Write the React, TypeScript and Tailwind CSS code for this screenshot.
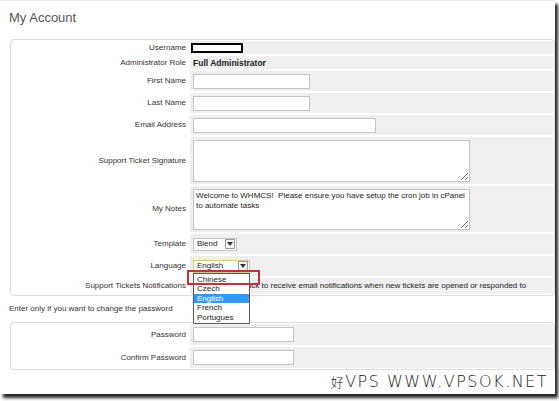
import React from "react";

const FONT = "font-['Liberation_Sans',Arial,sans-serif]";

function SelectArrow() {
  return (
    <span className="flex h-[10px] w-[10px] items-center justify-center border border-[#9a9a9a] bg-[#f4f4f4]">
      <svg width="6" height="4" viewBox="0 0 6 4">
        <path d="M0 0 L6 0 L3 4 Z" fill="#333" />
      </svg>
    </span>
  );
}

function Row({
  label,
  hClass,
  children,
}: {
  label: string;
  hClass: string;
  children?: React.ReactNode;
}) {
  return (
    <div className={`flex ${hClass}`}>
      <div className="flex w-[176px] items-center justify-end pr-[2px] text-[8px] text-[#333]">
        {label}
      </div>
      <div className="relative ml-[2px] flex flex-1 items-center bg-[#efefef] pl-[3px] text-[8px] text-[#222]">
        {children}
      </div>
    </div>
  );
}

export default function App() {
  return (
    <div className={`relative h-[401px] w-[559px] overflow-hidden bg-white ${FONT}`}>
      <div className="flex h-[394px] w-[555px] flex-col border-t border-[#ececec] bg-white shadow-[3px_4px_3px_rgba(0,0,0,0.85)]">
        <div className="h-[39px] pl-[9px] pt-[9px] text-[13px] leading-[16px] text-[#555]">
          My Account
        </div>

        <div className="ml-[10px] flex flex-col gap-[2px] rounded-[4px] border border-[#dcdcdc] p-[1px]">
          <Row label="Username" hClass="h-[13px]">
            <div className="-ml-[2px] h-[10px] w-[52px] border-2 border-black bg-white" />
          </Row>
          <Row label="Administrator Role" hClass="h-[13px]">
            <span className="font-bold text-[8.5px] text-[#222]">Full Administrator</span>
          </Row>
          <Row label="First Name" hClass="h-[20px]">
            <div className="h-[15px] w-[117px] border border-[#c4c4c4] bg-white" />
          </Row>
          <Row label="Last Name" hClass="h-[20px]">
            <div className="h-[15px] w-[117px] border border-[#c4c4c4] bg-white" />
          </Row>
          <Row label="Email Address" hClass="h-[20px]">
            <div className="h-[15px] w-[183px] border border-[#c4c4c4] bg-white" />
          </Row>
          <Row label="Support Ticket Signature" hClass="h-[47px]">
            <textarea
              readOnly
              className={`h-[42px] w-[277px] border border-[#c4c4c4] bg-white text-[8px] outline-none ${FONT}`}
            />
          </Row>
          <Row label="My Notes" hClass="h-[46px]">
            <textarea
              readOnly
              value={"Welcome to WHMCS!  Please ensure you have setup the cron job in cPanel to automate tasks"}
              className={`h-[41px] w-[277px] resize border border-[#c4c4c4] bg-white px-[2px] py-[1px] text-[8px] leading-[10px] text-[#222] outline-none ${FONT}`}
            />
          </Row>
          <Row label="Template" hClass="h-[20px]">
            <div className="flex h-[13px] w-[44px] items-center justify-between border border-[#c4c4c4] bg-white pl-[3px] pr-[1px]">
              <span>Blend</span>
              <SelectArrow />
            </div>
          </Row>
          <Row label="Language" hClass="h-[20px]">
            <div className="relative flex h-[13px] w-[57px] items-center justify-between border border-[#d9c48a] bg-white pl-[3px] pr-[1px]">
              <span>English</span>
              <SelectArrow />
              <div className="absolute left-[-1px] top-[12px] z-10 flex w-[57px] flex-col border border-[#5a5a5a] bg-white py-[1px] text-[8px] leading-[9.4px] text-[#222]">
                <span className="pl-[3px]">Chinese</span>
                <span className="pl-[3px]">Czech</span>
                <span className="bg-[#3399ff] pl-[3px] text-white">English</span>
                <span className="pl-[3px]">French</span>
                <span className="pl-[3px]">Portugues</span>
              </div>
              <div className="absolute left-[-7px] top-[9px] z-20 h-[15px] w-[73px] border-2 border-[#c6303a]" />
            </div>
          </Row>
          <Row label="Support Tickets Notifications" hClass="h-[16px]">
            <input type="checkbox" className="h-[10px] w-[10px]" />
            <span className="ml-[42px]">Tick to receive email notifications when new tickets are opened or responded to</span>
          </Row>
        </div>

        <div className="flex h-[26px] items-center pl-[9px] text-[8px] text-[#333]">
          Enter only if you want to change the password
        </div>

        <div className="ml-[10px] flex flex-col gap-[2px] rounded-[4px] border border-[#dcdcdc] p-[1px]">
          <Row label="Password" hClass="h-[21px]">
            <div className="h-[15px] w-[101px] border border-[#c4c4c4] bg-white" />
          </Row>
          <Row label="Confirm Password" hClass="h-[21px]">
            <div className="h-[15px] w-[101px] border border-[#c4c4c4] bg-white" />
          </Row>
        </div>

        <div className="flex flex-1 items-center justify-end pr-[7px] font-['DejaVu_Sans','Noto_Sans_CJK_SC',sans-serif] text-[16px] font-light tracking-[1.5px] text-[#222]">
          <span className="font-['Noto_Sans_CJK_SC',sans-serif] text-[13px]">好</span>VPS WWW.VPSOK.NET
        </div>
      </div>
    </div>
  );
}
